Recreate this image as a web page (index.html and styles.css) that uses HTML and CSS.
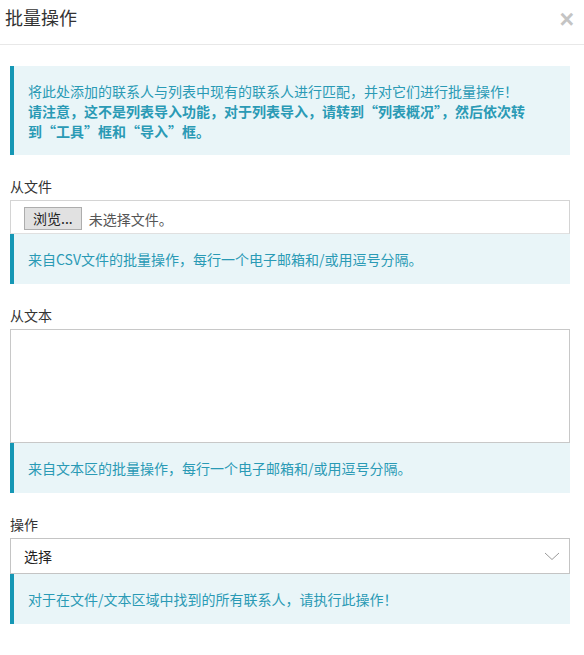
FILE: index.html
```html
<!DOCTYPE html>
<html lang="zh-CN">
<head>
<meta charset="utf-8">
<title>批量操作</title>
<link rel="stylesheet" href="styles.css">
</head>
<body>
<div class="modal">
  <div class="modal-header">
    <h4 class="modal-title">批量操作</h4>
    <span class="close">×</span>
  </div>
  <div class="modal-body">
    <div class="alert alert-intro">
      <p>将此处添加的联系人与列表中现有的联系人进行匹配，并对它们进行批量操作！</p>
      <p class="strong">请注意，这不是列表导入功能，对于列表导入，请转到“列表概况”，然后依次转到“工具”框和“导入”框。</p>
    </div>

    <div class="form-group">
      <label class="field-label">从文件</label>
      <div class="file-input">
        <span class="file-btn">浏览...</span>
        <span class="file-name">未选择文件。</span>
      </div>
      <div class="alert">来自CSV文件的批量操作，每行一个电子邮箱和/或用逗号分隔。</div>
    </div>

    <div class="form-group">
      <label class="field-label">从文本</label>
      <div class="textarea"></div>
      <div class="alert">来自文本区的批量操作，每行一个电子邮箱和/或用逗号分隔。</div>
    </div>

    <div class="form-group">
      <label class="field-label">操作</label>
      <div class="select">
        <span class="select-value">选择</span>
        <svg class="chevron" width="16" height="9" viewBox="0 0 16 9"><path d="M1 1 L8 7.5 L15 1" fill="none" stroke="#9a9a9a" stroke-width="1"/></svg>
      </div>
      <div class="alert">对于在文件/文本区域中找到的所有联系人，请执行此操作！</div>
    </div>
  </div>
</div>
</body>
</html>
```

FILE: styles.css
```css
* { box-sizing: border-box; }
html, body { margin: 0; padding: 0; background: #fff; }
body {
  font-family: "Noto Sans CJK SC", "Noto Sans", "Liberation Sans", sans-serif;
  font-size: 14px;
  color: #333;
  width: 584px;
}
.modal-header {
  display: flex;
  justify-content: space-between;
  align-items: flex-start;
  padding: 5px 10px 14px 5px;
  border-bottom: 1px solid #e8e8e8;
}
.modal-title {
  margin: 0;
  font-size: 18px;
  font-weight: normal;
  line-height: 25px;
  color: #333;
}
.close {
  font-family: "Liberation Sans", sans-serif;
  font-size: 25px;
  font-weight: bold;
  line-height: 20px;
  margin-top: 4px;
  color: #c4c4c4;
}
.modal-body {
  padding: 21px 14px 0 10px;
}
.alert {
  background: #e9f5f8;
  border-left: 4px solid #1597b5;
  color: #2a9ab5;
  line-height: 20px;
  padding: 15px 30px 15px 14px;
}
.alert p { margin: 0; }
.alert .strong { font-weight: bold; }
.alert-intro { padding: 15px 41px 14px 14px; }
.form-group { margin-top: 21px; }
.field-label {
  display: block;
  line-height: 20px;
  margin-bottom: 4px;
  color: #333;
}
.form-group:first-of-type .field-label { margin-bottom: 5px; }
.file-input {
  display: flex;
  align-items: center;
  height: 34px;
  border: 1px solid #d4d4d4;
  border-bottom-color: #e0e0e0;
  padding: 0 13px;
}
.file-btn {
  display: inline-block;
  height: 23px;
  line-height: 21px;
  padding: 0 8px;
  border: 1px solid #adadad;
  background: #e1e1e1;
  color: #222;
  margin-top: 3px;
}
.file-name {
  margin-left: 7px;
  color: #555;
  margin-top: 3px;
}
.textarea {
  height: 114px;
  border: 1px solid #c8c8c8;
}
.select {
  display: flex;
  align-items: center;
  justify-content: space-between;
  height: 36px;
  border: 1px solid #c4c4c4;
  padding: 0 8px 0 13px;
}
.select-value { color: #222; }
.chevron { display: block; margin-right: 1px; }
```
